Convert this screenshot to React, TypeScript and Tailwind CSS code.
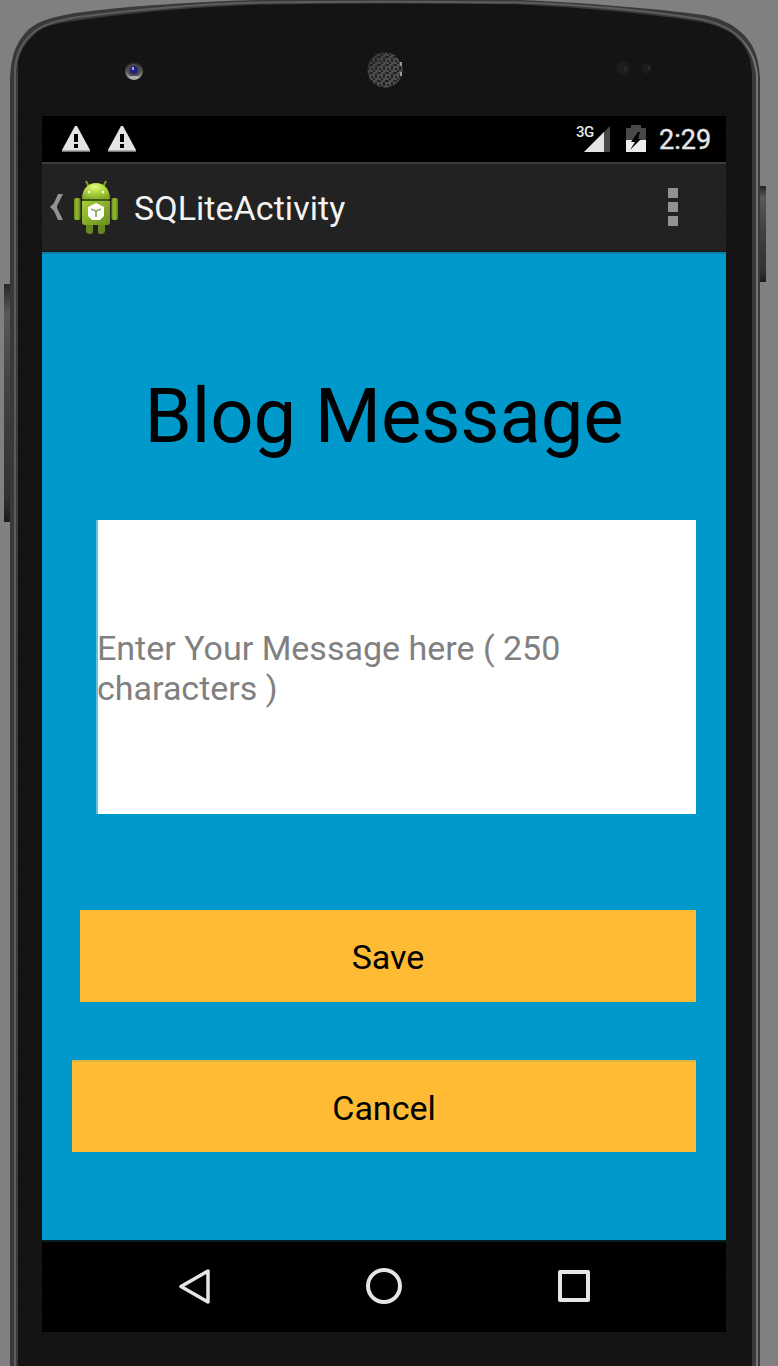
function DeviceFrame() {
  return (
    <svg className="absolute inset-0" width="778" height="1366" viewBox="0 0 778 1366" aria-hidden="true">
      <defs>
        <pattern id="grain" width="22" height="26" patternUnits="userSpaceOnUse">
          <rect width="22" height="26" fill="#141414" />
          <path d="M0 0h2v2H0zM6 4h2v2H6zM14 2h4v2h-4zM2 10h2v4H2zM10 12h2v2h-2zM18 16h2v2h-2zM6 20h4v2H6zM14 22h2v2h-2z" fill="#161616" />
          <path d="M8 0h2v2H8zM18 8h2v4h-2zM4 16h2v2H4zM12 18h2v2h-2zM10 6h2v2h-2zM0 22h2v2H0z" fill="#121212" />
        </pattern>
        <linearGradient id="key" x1="0" y1="0" x2="0" y2="1">
          <stop offset="0" stopColor="#252527" />
          <stop offset="0.12" stopColor="#59595b" />
          <stop offset="0.4" stopColor="#444446" />
          <stop offset="0.9" stopColor="#303032" />
          <stop offset="1" stopColor="#1b1b1c" />
        </linearGradient>
        <linearGradient id="rim" x1="0" y1="0" x2="778" y2="0" gradientUnits="userSpaceOnUse">
          <stop offset="0" stopColor="#5c5c60" />
          <stop offset="0.95" stopColor="#5c5c60" />
          <stop offset="0.97" stopColor="#77777b" />
        </linearGradient>
        <linearGradient id="lens" x1="0" y1="0" x2="0" y2="1">
          <stop offset="0" stopColor="#222" />
          <stop offset="0.5" stopColor="#555" />
          <stop offset="1" stopColor="#bbb" />
        </linearGradient>
        <pattern id="mesh" x="367" y="52" width="8" height="8" patternUnits="userSpaceOnUse">
          <rect width="8" height="8" fill="#484848" />
          <path d="M0 0h2v2H0zM4 0h2v2H4zM2 4h4v2H2zM6 2h2v2H6zM0 6h2v2H0z" fill="#151515" />
        </pattern>
        <linearGradient id="shade" x1="0" y1="0" x2="1" y2="1">
          <stop offset="0" stopColor="#141414" stopOpacity="0.6" />
          <stop offset="0.7" stopColor="#777" stopOpacity="0.1" />
          <stop offset="1" stopColor="#999" stopOpacity="0.3" />
        </linearGradient>
      </defs>
      <rect x="4" y="284" width="8" height="238" fill="url(#key)" />
      <rect x="758" y="186" width="8" height="96" fill="url(#key)" />
      <path d="M10 1370V78C11 54 17 41 29 29C40 20 53 17 75 13C130 6 190 2 260 0C340-1 430-1 520 0C590 3 660 9 704 15C724 19 735 26 744 35C756 47 759 62 760 78V1370Z" fill="#39393b" />
      <path d="M15 1370V70C16 54 23 41 34 32C44 24 57 21 75 17.500C140 9 200 4 260 2.500C340 1.500 430 1.500 520 2.500C590 5 655 12 700 19C720 23 731 29 740 38C752 50 756 62 757 76V1370Z" fill="none" stroke="url(#rim)" strokeWidth="2" />
      <path d="M18 1370V62C20 50 27 41 36 33C44 26 55 24 70 21.500C140 11 200 7 260 4.500C340 3 430 3 520 4.500C590 8 650 14 696 21C717 25 730 30 738 39C748 49 752 60 752 78V1370Z" fill="url(#grain)" />
      <circle cx="134" cy="71" r="9" fill="url(#lens)" />
      <circle cx="134" cy="70.500" r="6.500" fill="#4d4d50" />
      <circle cx="134" cy="70" r="4" fill="#202080" />
      <path d="M132 67h2v3h-2z" fill="#9ba4cf" />
      <path d="M130 76h8v2h-8z" fill="#b0b0b0" />
      <circle cx="385" cy="70" r="17.500" fill="url(#mesh)" />
      <circle cx="385" cy="70" r="17.500" fill="url(#shade)" />
      <path d="M400 62h2v4h-2zM400 72h2v4h-2z" fill="#999" />
      <circle cx="623" cy="68" r="7" fill="#1d1c1c" />
      <path d="M624 67h2v4h-2z" fill="#3b2420" />
      <circle cx="647" cy="68" r="5" fill="#1d1c1c" />
      <path d="M648 67h2v3h-2z" fill="#3b2a22" />
    </svg>
  );
}

function Warning() {
  return (
    <svg width="28" height="26" viewBox="0 0 28 26" aria-hidden="true">
      <path d="M13 0H15L28 24V26H0V24Z" fill="#e4e4e4" />
      <path d="M0 24.500h28v1.500H0z" fill="#777" />
      <path d="M12 8h4v8h-4zM12 18h4v4h-4z" fill="#000" />
    </svg>
  );
}

function Signal() {
  return (
    <svg width="26" height="26" viewBox="0 0 26 26" aria-hidden="true">
      <path d="M26 0V26H0Z" fill="#484848" />
      <path d="M20 6V26H0Z" fill="#e4e4e4" />
    </svg>
  );
}

function Battery() {
  return (
    <svg width="20" height="28" viewBox="0 0 20 28" aria-hidden="true">
      <path d="M5 0H15V3H20V27H0V3H5Z" fill="#484848" />
      <path d="M0 15H20V27H0Z" fill="#eee" />
      <path d="M12 7L5 17H9L4 25L15 14H12L14 7Z" fill="#000" />
    </svg>
  );
}

function AppIcon() {
  return (
    <svg width="46" height="54" viewBox="0 0 46 54" aria-hidden="true">
      <defs>
        <linearGradient id="bot" x1="0" y1="0" x2="1" y2="1">
          <stop offset="0" stopColor="#a5ce3a" />
          <stop offset="1" stopColor="#6b8d1c" />
        </linearGradient>
        <linearGradient id="arm" x1="0" y1="0" x2="1" y2="0">
          <stop offset="0" stopColor="#6f921e" />
          <stop offset="0.500" stopColor="#93ba33" />
          <stop offset="1" stopColor="#5f7f1a" />
        </linearGradient>
        <radialGradient id="head" cx="0.450" cy="0.250" r="0.800">
          <stop offset="0" stopColor="#e2fa7c" />
          <stop offset="0.500" stopColor="#abd43c" />
          <stop offset="1" stopColor="#7fa626" />
        </radialGradient>
      </defs>
      <path d="M13 0L16 6M33 0L30 6" stroke="#7ea520" strokeWidth="2" />
      <path d="M9 18C9 8 15 2 23 2C31 2 37 8 37 18Z" fill="url(#head)" />
      <path d="M9 20H37V41Q37 44 34 44H12Q9 44 9 41Z" fill="url(#bot)" />
      <path d="M10 18H36V20H10Z" fill="#405a14" />
      <rect x="1" y="17" width="6.500" height="22" rx="2" fill="url(#arm)" />
      <rect x="38.500" y="17" width="6.500" height="22" rx="2" fill="url(#arm)" />
      <path d="M13 44H20V50Q20 53 17 53Q13 53 13 50ZM25 44H32V50Q32 53 28 53Q25 53 25 51Z" fill="#668723" />
      <circle cx="16" cy="11" r="1.200" fill="#fff" />
      <circle cx="30" cy="11" r="1.200" fill="#fff" />
      <path d="M23 22L31 26V35L27 39H19L15 35V26Z" fill="#fff" />
      <path d="M18 28L23 30L28 28M23 30V36" fill="none" stroke="#92ad66" strokeWidth="1.800" />
    </svg>
  );
}

export default function App() {
  return (
    <main className="relative h-[1366px] w-[778px] overflow-hidden bg-[#808080] pl-[42px] pt-[116px] font-['Roboto',sans-serif]">
      <DeviceFrame />
      <div className="relative flex h-[1216px] w-[684px] flex-col bg-[#0099cc]">
        <header className="shrink-0">
          <div className="flex h-[46px] items-start bg-black pl-5 pt-[10px] text-[#e6e6e6]">
            <div className="flex gap-[18px]">
              <Warning />
              <Warning />
            </div>
            <div className="ml-auto flex items-start pr-[15px]">
              <span className="-mt-px w-[18px] text-[15px] leading-[15px] font-medium tracking-[-0.5px]">3G</span>
              <span className="-ml-[10px]"><Signal /></span>
              <span className="-mt-px ml-[16px]"><Battery /></span>
              <span className="ml-[13px] w-[52px] whitespace-nowrap text-[27px] leading-[28px] [-webkit-text-stroke:0.4px_#e6e6e6]">2:29</span>
            </div>
          </div>
          <div className="flex h-[90px] border-t-2 border-b-2 border-t-[#3b3b3b] border-b-[#1b1b1b] bg-[#222222] pl-[8px]">
            <svg className="mt-[29px]" width="14" height="28" viewBox="0 0 14 28" aria-hidden="true">
              <path d="M8 1H13L7 13V15L13 27H8L4 18L0 14L4 10Z" fill="#929292" />
            </svg>
            <span className="ml-[9px] mt-[17px]"><AppIcon /></span>
            <h1 className="ml-[15px] mt-[24px] whitespace-nowrap text-[34px] leading-[40px] tracking-[0.05px] text-[#f3f3f3]">SQLiteActivity</h1>
            <div className="ml-auto mr-[48px] mt-[24px] flex flex-col gap-1">
              <i className="size-[10px] bg-[#929292]" />
              <i className="size-[10px] bg-[#929292]" />
              <i className="size-[10px] bg-[#929292]" />
            </div>
          </div>
        </header>
        <section className="flex flex-1 flex-col border-t-2 border-[#087fa7] text-black">
          <h2 className="mt-[117px] text-center text-[76px] leading-[90px] tracking-[-0.1px]">Blog Message</h2>
          <div className="ml-[54px] mt-[59px] flex h-[294px] w-[600px] items-center border-l-2 border-[#65c0df] bg-white text-[34px] leading-[40px] text-[#808080]">
            <p className="mt-px -ml-px">Enter Your Message here ( 250<br />characters )</p>
          </div>
          <button className="ml-[38px] mt-[96px] h-[92px] w-[616px] bg-[#ffbb33] pt-px text-[34px] leading-[40px]">Save</button>
          <button className="ml-[30px] mt-[58px] h-[92px] w-[624px] border-t-2 border-[#d7b444] bg-[#ffbb33] pt-px text-[34px] leading-[40px]">Cancel</button>
        </section>
        <nav className="flex h-[92px] shrink-0 items-start border-t-2 border-[#071c23] bg-black pl-[136px] pt-[26px]">
          <svg width="34" height="38" viewBox="0 0 34 38" aria-hidden="true">
            <path d="M3 18.500L30 3V34Z" fill="none" stroke="#e5e5e5" strokeWidth="3.500" strokeLinejoin="round" />
          </svg>
          <svg className="ml-[153px]" width="38" height="38" viewBox="0 0 38 38" aria-hidden="true">
            <circle cx="19" cy="18" r="16" fill="none" stroke="#e5e5e5" strokeWidth="4" />
          </svg>
          <svg className="ml-[154px]" width="34" height="38" viewBox="0 0 34 38" aria-hidden="true">
            <rect x="3" y="4" width="28" height="28" fill="none" stroke="#e5e5e5" strokeWidth="4" strokeLinejoin="round" />
          </svg>
        </nav>
      </div>
    </main>
  );
}
